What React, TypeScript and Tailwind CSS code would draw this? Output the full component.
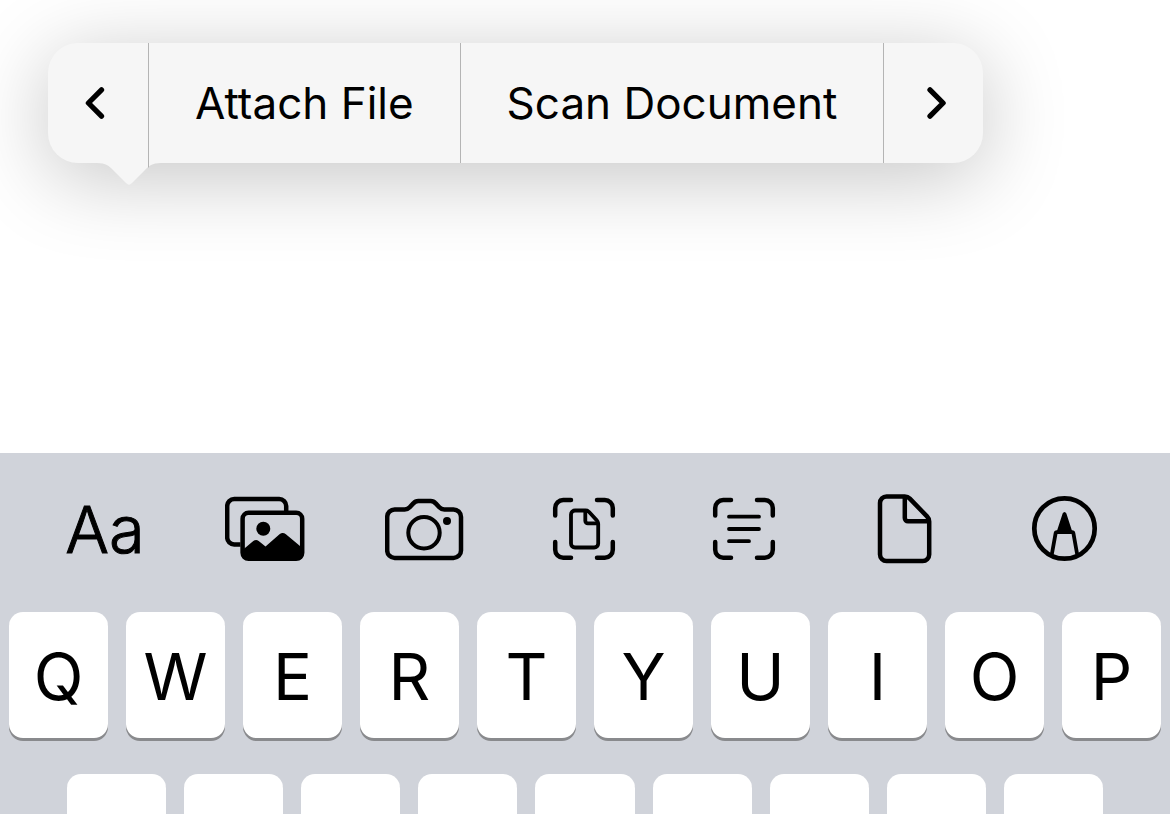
import React from 'react';

const TOP_ROW = ['Q', 'W', 'E', 'R', 'T', 'Y', 'U', 'I', 'O', 'P'];
const HOME_ROW = ['A', 'S', 'D', 'F', 'G', 'H', 'J', 'K', 'L'];

const Icon = ({ children }: { children: React.ReactNode }) => (
  <svg
    viewBox="0 0 80 80"
    className="size-20"
    fill="none"
    stroke="currentColor"
    strokeWidth={4.5}
    strokeLinecap="round"
    strokeLinejoin="round"
    aria-hidden="true"
  >
    {children}
  </svg>
);

const ScanFrame = () => (
  <path d="M10.2 26.5V19a8 8 0 0 1 8-8H26M52 11h7.8a8 8 0 0 1 8 8v7.5M67.8 53v7.8a8 8 0 0 1-8 8H52M26 68.8h-7.8a8 8 0 0 1-8-8V53" />
);

const PhotosIcon = () => (
  <Icon>
    <path strokeLinecap="butt" d="M15.5 55.5H9.2a7 7 0 0 1-7-7V17a7 7 0 0 1 7-7h45a7 7 0 0 1 7 7v5" />
    <rect x="17.6" y="23.8" width="59.6" height="46" rx="6" />
    <circle cx="38.3" cy="39.8" r="7" fill="currentColor" stroke="none" />
    <path
      fill="currentColor"
      stroke="none"
      d="M17 61.5 28.3 52q2.7-2.2 5.4 0l6.8 5.6L54.5 45.3q3.2-2.8 6.4 0L78 59.5V66a5 5 0 0 1-5 5H22a5 5 0 0 1-5-5z"
    />
  </Icon>
);

const CameraIcon = () => (
  <Icon>
    <path d="M2.2 28a7.5 7.5 0 0 1 7.5-7.5h10q3 0 5-2.2l3.6-3.9q2-2.3 5-2.3h12.4q3 0 5 2.3l3.6 3.9q2 2.2 5 2.2h9.2a7.5 7.5 0 0 1 7.5 7.5v33.4a7.5 7.5 0 0 1-7.5 7.5H9.7a7.5 7.5 0 0 1-7.5-7.5z" />
    <circle cx="39" cy="43.7" r="15.7" strokeWidth={4} />
    <circle cx="62" cy="32" r="4" fill="currentColor" stroke="none" />
  </Icon>
);

const ScanDocumentIcon = () => (
  <Icon>
    <ScanFrame />
    <g strokeWidth={3.8}>
      <path d="M30 21.5h10.6q2 0 3.5 1.5l7.6 8.2q1.5 1.6 1.5 3.6V54.5a4 4 0 0 1-4 4H30a4 4 0 0 1-4-4v-29a4 4 0 0 1 4-4z" />
      <path d="M40.3 22v9.8a2.5 2.5 0 0 0 2.5 2.5h10" />
    </g>
  </Icon>
);

const ScanTextIcon = () => (
  <Icon>
    <ScanFrame />
    <path strokeWidth={3.8} d="M24 27.7h30M24 40h30M24 52.2h20" />
  </Icon>
);

const FileIcon = () => (
  <Icon>
    <path d="M21.5 7.5h18.3q3 0 5 2.1l17.2 17.8q2.2 2.2 2.2 5.2v33a6.500 6.500 0 0 1-6.500 6.500H21.500a6.500 6.500 0 0 1-6.500-6.500V14a6.500 6.500 0 0 1 6.500-6.500z" />
    <path d="M39.8 8.5v20.6a3.2 3.2 0 0 0 3.2 3.2h20" />
  </Icon>
);

const MarkupIcon = () => (
  <Icon>
    <circle cx="39.5" cy="39.5" r="30.2" strokeWidth={4.7} />
    <path fill="currentColor" strokeWidth={2} d="m38.5 25-5.7 17.5v1.5h13.4v-1.5L40.5 25q-1-2-2 0z" />
    <path strokeWidth={3.8} strokeLinecap="butt" d="m26.8 65.5 3.8-21.2q.2-1.2 1.2-1.2h15.4q1 0 1.2 1.2l3.8 21.2" />
  </Icon>
);

const TOOLS = [
  { label: 'Photos', icon: <PhotosIcon /> },
  { label: 'Camera', icon: <CameraIcon /> },
  { label: 'Scan Document', icon: <ScanDocumentIcon /> },
  { label: 'Scan Text', icon: <ScanTextIcon /> },
  { label: 'Attach File', icon: <FileIcon /> },
  { label: 'Markup', icon: <MarkupIcon /> },
];

const Chevron = ({ d }: { d: string }) => (
  <svg viewBox="0 0 24 36" className="h-9 w-6" fill="none" stroke="currentColor" strokeWidth={5.3} strokeLinecap="round" strokeLinejoin="round" aria-hidden="true">
    <path d={d} />
  </svg>
);

function EditMenu() {
  return (
    <div role="toolbar" aria-label="Edit menu" className="relative flex h-[120px] w-fit rounded-[30px] bg-[#f6f6f6] text-[44px] shadow-[0_14px_84px_rgba(0,0,0,0.23)]">
      <button aria-label="Previous" className="flex w-[100px] items-center justify-center pr-1.5">
        <Chevron d="M18.5 4.9 5.4 18l13.1 13.1" />
      </button>
      <button className="border-l border-[#b4b4b4] px-[46px]">Attach File</button>
      <button className="border-l border-[#b4b4b4] px-[46px]">Scan Document</button>
      <button aria-label="Next" className="flex w-[100px] items-center justify-center border-l border-[#b4b4b4] pl-1.5">
        <Chevron d="M5 4.9 18.1 18 5 31.1" />
      </button>
      {/* pointer under the bubble */}
      <svg viewBox="0 0 64 24" className="absolute top-full left-[49px] h-6 w-16" aria-hidden="true">
        <path fill="#f6f6f6" d="M0 0c9 0 12 3 16 7l13 13q3 3.5 6 0L48 7c4-4 7-7 16-7z" />
        <path stroke="#b4b4b4" d="M51.5 0v4.5" />
      </svg>
    </div>
  );
}

function Key({ label, children }: { label: string; children?: React.ReactNode }) {
  return (
    <button
      aria-label={label}
      className="h-[126px] min-w-0 flex-1 rounded-[14px] bg-white pt-0.5 text-[65px] leading-none shadow-[0_3px_0_#898a8d]"
    >
      {children}
    </button>
  );
}

export default function App() {
  return (
    <main className="flex h-screen flex-col overflow-hidden bg-white font-['Inter',sans-serif] text-black">
      <section className="h-[453px] shrink-0 px-12 pt-[43px]">
        <EditMenu />
      </section>
      <section aria-label="Keyboard" className="relative min-h-0 flex-1 overflow-hidden bg-[#d0d3da]">
        <div className="flex h-[159px] px-[25px] pt-9">
          <button aria-label="Text format" className="flex h-20 flex-1 items-center justify-center text-[65px] leading-none font-light [-webkit-text-stroke:1px_black]">
            Aa
          </button>
          {TOOLS.map((tool) => (
            <button key={tool.label} aria-label={tool.label} className="flex h-20 flex-1 items-center justify-center">
              {tool.icon}
            </button>
          ))}
        </div>
        <div className="flex gap-[18px] px-[9px]">
          {TOP_ROW.map((k) => (
            <Key key={k} label={k}>{k}</Key>
          ))}
        </div>
        <div className="mt-9 flex gap-[18px] px-[67px]">
          {HOME_ROW.map((k) => (
            <Key key={k} label={k} />
          ))}
        </div>
      </section>
    </main>
  );
}
